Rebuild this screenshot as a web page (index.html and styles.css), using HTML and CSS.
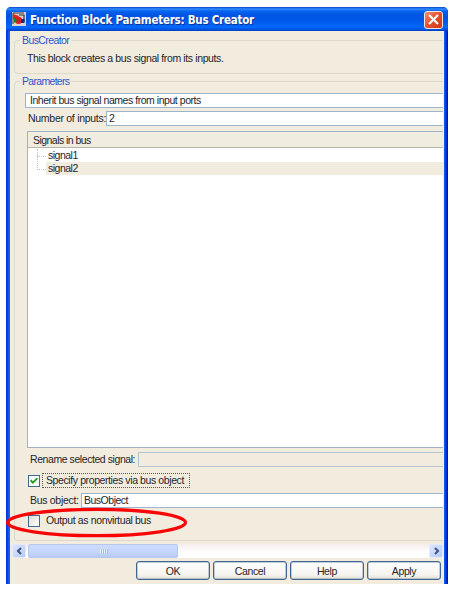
FILE: index.html
```html
<!DOCTYPE html>
<html lang="en">
<head>
<meta charset="utf-8">
<title>Function Block Parameters: Bus Creator</title>
<link rel="stylesheet" href="styles.css">
</head>
<body>
<main class="window">
  <header class="titlebar">
    <svg class="app-icon" width="14" height="14" viewBox="0 0 14 14">
      <rect width="14" height="14" fill="#d9d4d2"/>
      <path d="M1 12V1h11" fill="none" stroke="#403638"/>
      <path d="M7 3h5v7" fill="none" stroke="#333" stroke-width="1.2"/>
      <path d="M1 2l6 2-2 4-4-1z" fill="#e5221c"/>
      <circle cx="6.5" cy="8.3" r="3.6" fill="#d91d1d"/>
      <path d="M2 5l3 4-3 2z" fill="#16862f"/>
      <rect x="9" y="7" width="3.5" height="4" fill="#1b2a86"/>
    </svg>
    <h1 class="title">Function Block Parameters: Bus Creator</h1>
    <button class="close" aria-label="Close">
      <svg width="11" height="11" viewBox="0 0 11 11"><path d="M1 1l9 9M10 1l-9 9" stroke="#fff" stroke-width="2.1"/></svg>
    </button>
  </header>
  <section class="content">
    <fieldset class="group about">
      <legend class="t-about">BusCreator</legend>
      <p class="t-desc">This block creates a bus signal from its inputs.</p>
    </fieldset>
    <fieldset class="group params">
      <legend class="t-params">Parameters</legend>
      <div class="field select"><span class="t-inherit">Inherit bus signal names from input ports</span></div>
      <div class="row inputs"><label class="t-number">Number of inputs:</label><div class="field">2</div></div>
      <div class="list">
        <div class="list-head"><span class="t-signals">Signals in bus</span></div>
        <ul class="tree">
          <li><span class="t-signal">signal1</span></li>
          <li class="selected"><span class="t-signal">signal2</span></li>
        </ul>
      </div>
      <div class="row rename"><label class="t-rename">Rename selected signal:</label><div class="field disabled"></div></div>
      <div class="row specify">
        <span class="check"><svg width="10" height="10" viewBox="0 0 10 10"><path d="M1.6 4.2l2.3 2.4 4.5-4.5" fill="none" stroke="#21a121" stroke-width="2"/></svg></span>
        <span class="focus"><span class="t-specify">Specify properties via bus object</span></span>
      </div>
      <div class="row object"><label class="t-object">Bus object:</label><div class="field"><span class="t-value">BusObject</span></div></div>
      <div class="row output">
        <span class="check"></span><span class="t-output">Output as nonvirtual bus</span>
      </div>
    </fieldset>
    <div class="scrollbar">
      <span class="arrow"><svg width="7" height="8" viewBox="0 0 7 8"><path d="M5 1L2 4l3 3" fill="none" stroke="#40557c" stroke-width="2"/></svg></span>
      <span class="thumb"><i></i><i></i><i></i><i></i></span>
      <span class="arrow end"><svg width="7" height="8" viewBox="0 0 7 8"><path d="M2 1l3 3-3 3" fill="none" stroke="#40557c" stroke-width="2"/></svg></span>
    </div>
    <footer class="buttons">
      <button>OK</button><button>Cancel</button><button>Help</button><button>Apply</button>
    </footer>
  </section>
</main>
<svg class="highlight" width="184" height="34" viewBox="0 0 184 34"><ellipse cx="91.5" cy="16.5" rx="89" ry="13.2" fill="none" stroke="#f80606" stroke-width="3.2"/></svg>
</body>
</html>
```
FILE: styles.css
```css
* { box-sizing: border-box; }
body {
  margin: 0;
  width: 457px;
  height: 591px;
  padding: 7px 0 0 6px;
  background: #fff;
  color: #25242a;
  font: 10.5px/14px "Liberation Sans", Arial, sans-serif;
  letter-spacing: -0.3px;
  white-space: nowrap;
  overflow: hidden;
}
h1, p, ul, fieldset, legend { margin: 0; padding: 0; }
button { font: inherit; letter-spacing: inherit; color: inherit; padding: 0; }
.window {
  width: 442px;
  height: 577px;
  border-radius: 5px 5px 0 0;
  overflow: hidden;
  background: linear-gradient(90deg, #0831d9, #0831d9 1px, #0a50ee 2px, #1666ec 4px, #1666ec 438px, #0a4df0 439px, #001fc5 441px, #00138c);
}
.titlebar {
  display: flex;
  align-items: center;
  height: 24px;
  padding: 1px 6px 0 6px;
  background: linear-gradient(#0a46c8 0, #2f8cff 2px, #0864ee 4px, #0054e3 8px, #0058ea 14px, #0369fc 20px, #0059e8 22px, #003dc0 24px);
}
.app-icon { flex: none; margin-top: -1px; }
.title {
  margin-left: 4px;
  flex: 1;
  color: #fff;
  font: bold 11.5px/18px "DejaVu Sans", Verdana, sans-serif;
  font-stretch: condensed;
  letter-spacing: -0.24px;
  text-shadow: 1px 1px #0a318f;
}
.close {
  display: grid;
  place-items: center;
  width: 19px;
  height: 18px;
  margin-right: -1px;
  border: 1px solid #f4e4e2;
  border-radius: 3px;
  background: linear-gradient(135deg, #f0906f, #e4512c 50%, #cc3512);
}
.content {
  height: 553px;
  margin: 0 4px;
  background: #f2ecdf;
  overflow: hidden;
}
.group {
  position: relative;
  margin-left: 4px;
  margin-right: 1px;
  border: 1px solid #ddd8ca;
  border-right: 0;
  border-radius: 4px 0 0 4px;
  min-width: 0;
}
legend {
  position: absolute;
  top: -8px;
  left: 5px;
  padding: 0 2px;
  background: #f2ecdf;
  color: #2c55cf;
}
.about { margin-top: 9px; height: 34px; padding: 10px 0 0 12px; }
.params { margin-top: 7px; height: 460px; padding: 11px 0 0 10px; }
.t-about { letter-spacing: -0.6px; }
.t-params { letter-spacing: -0.69px; }
.t-desc { letter-spacing: -0.38px; }
.t-inherit { letter-spacing: -0.46px; }
.t-number { letter-spacing: -0.28px; }
.t-signals { letter-spacing: -0.54px; }
.t-signal { letter-spacing: -0.5px; }
.t-rename { letter-spacing: -0.43px; }
.t-specify { letter-spacing: -0.4px; }
.t-object { letter-spacing: -0.3px; }
.t-value { letter-spacing: -0.49px; }
.t-output { letter-spacing: -0.37px; }
.field {
  flex: 1;
  height: 15px;
  border: 1px solid #9db5cc;
  border-right: 0;
  background: #fff;
  line-height: 13px;
  padding-left: 2px;
}
.select { padding-left: 4px; }
.row { display: flex; height: 15px; padding-left: 3px; }
.inputs { margin-top: 3px; }
.inputs label { width: 78px; }
.list {
  height: 317px;
  margin: 5px 0 0 2px;
  border: 1px solid #9db2c8;
  border-right: 0;
  background: #fff;
}
.list-head {
  height: 16px;
  padding-left: 5px;
  border-bottom: 1px solid #b9b2aa;
  background: #f0ece0;
  line-height: 16px;
}
.tree { padding-top: 1px; list-style: none; }
.tree li { position: relative; height: 13px; margin-left: 18px; padding-left: 2px; line-height: 12px; }
.tree .selected { background: #f2ecdf; }
.tree li::before {
  content: "";
  position: absolute;
  left: -9px;
  top: -7px;
  width: 8px;
  height: 14px;
  border-left: 1px dotted #c9bfc0;
  border-bottom: 1px dotted #c9bfc0;
}
.tree li:first-child::before { top: 0; height: 7px; }
.rename { margin-top: 4px; padding-left: 5px; }
.rename label { width: 108px; }
.disabled { background: #f2ecdf; border-color: #b5c4ce; }
.specify { margin-top: 6px; }
.check {
  display: grid;
  place-items: center;
  flex: none;
  width: 12px;
  height: 12px;
  margin-top: 2px;
  border: 1px solid #3f6a94;
  background: #fff;
}
.focus {
  width: 148px;
  height: 15px;
  margin-left: 2px;
  padding-left: 3px;
  border: 1px dotted #5c5951;
  line-height: 13px;
}
.object { margin-top: 5px; padding-left: 5px; }
.object label { width: 51px; }
.output { margin-top: 5px; }
.output .check { background: linear-gradient(135deg, #dcdcd7, #fff); }
.output .t-output { margin-left: 6px; }
.scrollbar {
  display: flex;
  height: 14px;
  margin: 3px 1px 0 2px;
  background: linear-gradient(#f4eeea, #fff 60%);
}
.arrow {
  display: grid;
  place-items: center;
  width: 14px;
  height: 14px;
  border: 1px solid #e3eafb;
  border-radius: 2px;
  background: linear-gradient(135deg, #dce6ff, #b7caf8);
}
.end { margin-left: auto; }
.thumb {
  display: flex;
  justify-content: center;
  align-items: center;
  gap: 1px;
  width: 150px;
  margin-left: 2px;
  border: 1px solid #b4c7ef;
  border-radius: 2px;
  background: linear-gradient(#cfdcff, #c4d4fd 60%, #b8caf6);
}
.thumb i { width: 1px; height: 5px; background: #e9f0ff; box-shadow: 1px 0 #a4b9e8; }
.buttons { display: flex; gap: 3px; margin: 3px 0 0 126px; }
.buttons button {
  width: 74px;
  height: 19px;
  border: 1px solid #3f6690;
  border-radius: 3px;
  background: linear-gradient(#fff, #f6f4ef 75%, #e5e0d8);
  box-shadow: inset 0 0 0 0.5px #88a0b8;
  letter-spacing: -0.35px;
}
.highlight { position: absolute; left: 5px; top: 506px; }
```
